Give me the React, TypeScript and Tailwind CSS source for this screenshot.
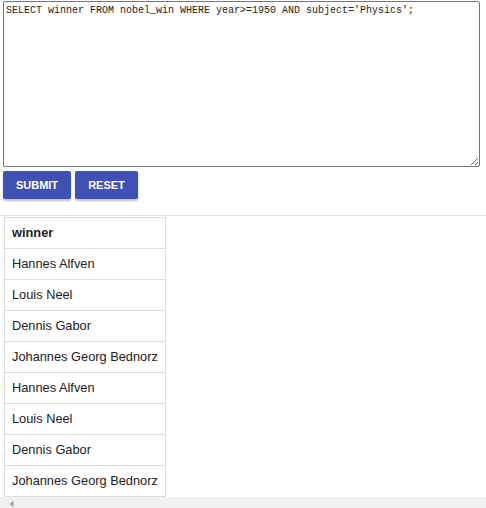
import React from "react";

const rows = [
  "Hannes Alfven",
  "Louis Neel",
  "Dennis Gabor",
  "Johannes Georg Bednorz",
  "Hannes Alfven",
  "Louis Neel",
  "Dennis Gabor",
  "Johannes Georg Bednorz",
];

export default function App() {
  return (
    <div className="w-[486px] h-[508px] overflow-hidden bg-white" style={{ fontFamily: '"Liberation Sans", Arial, sans-serif' }}>
      <div className="px-[3px] pt-[1px]">
        <textarea
          className="block w-[477px] h-[166px] border border-[#767676] rounded-[2px] px-[2px] py-[2px] text-[10px] leading-[13px] text-[#222] outline-none resize"
          style={{ fontFamily: '"Liberation Mono", "Courier New", monospace' }}
          defaultValue="SELECT winner FROM nobel_win WHERE year>=1950 AND subject='Physics';"
        />
      </div>
      <div className="flex gap-[4px] px-[3px] mt-[4px]">
        <button className="h-[28px] w-[68px] rounded-[2px] bg-[#3f51b5] text-white text-[11px] font-bold uppercase shadow-[0_2px_2px_rgba(0,0,0,0.25)]">
          Submit
        </button>
        <button className="h-[28px] w-[63px] rounded-[2px] bg-[#3f51b5] text-white text-[11px] font-bold uppercase shadow-[0_2px_2px_rgba(0,0,0,0.25)]">
          Reset
        </button>
      </div>
      <div className="mt-[16px] border-t border-[#dddddd] pl-[4px]">
        <table className="mt-[1px] border-collapse text-[12.8px] text-[#222]">
          <thead>
            <tr>
              <th className="border border-[#dddddd] h-[31px] px-[7px] text-left font-bold">winner</th>
            </tr>
          </thead>
          <tbody>
            {rows.map((r, i) => (
              <tr key={i}>
                <td className="border border-[#dddddd] h-[31px] px-[7px] whitespace-nowrap">{r}</td>
              </tr>
            ))}
          </tbody>
        </table>
        <div className="-ml-[4px] h-[14px] bg-[#f1f1f1] flex items-center pl-[9px]">
          <svg width="6" height="8" viewBox="0 0 6 8">
            <path d="M4.5 0.5 L0.5 4 L4.5 7.5 Z" fill="#a3a3a3" />
          </svg>
        </div>
      </div>
    </div>
  );
}
